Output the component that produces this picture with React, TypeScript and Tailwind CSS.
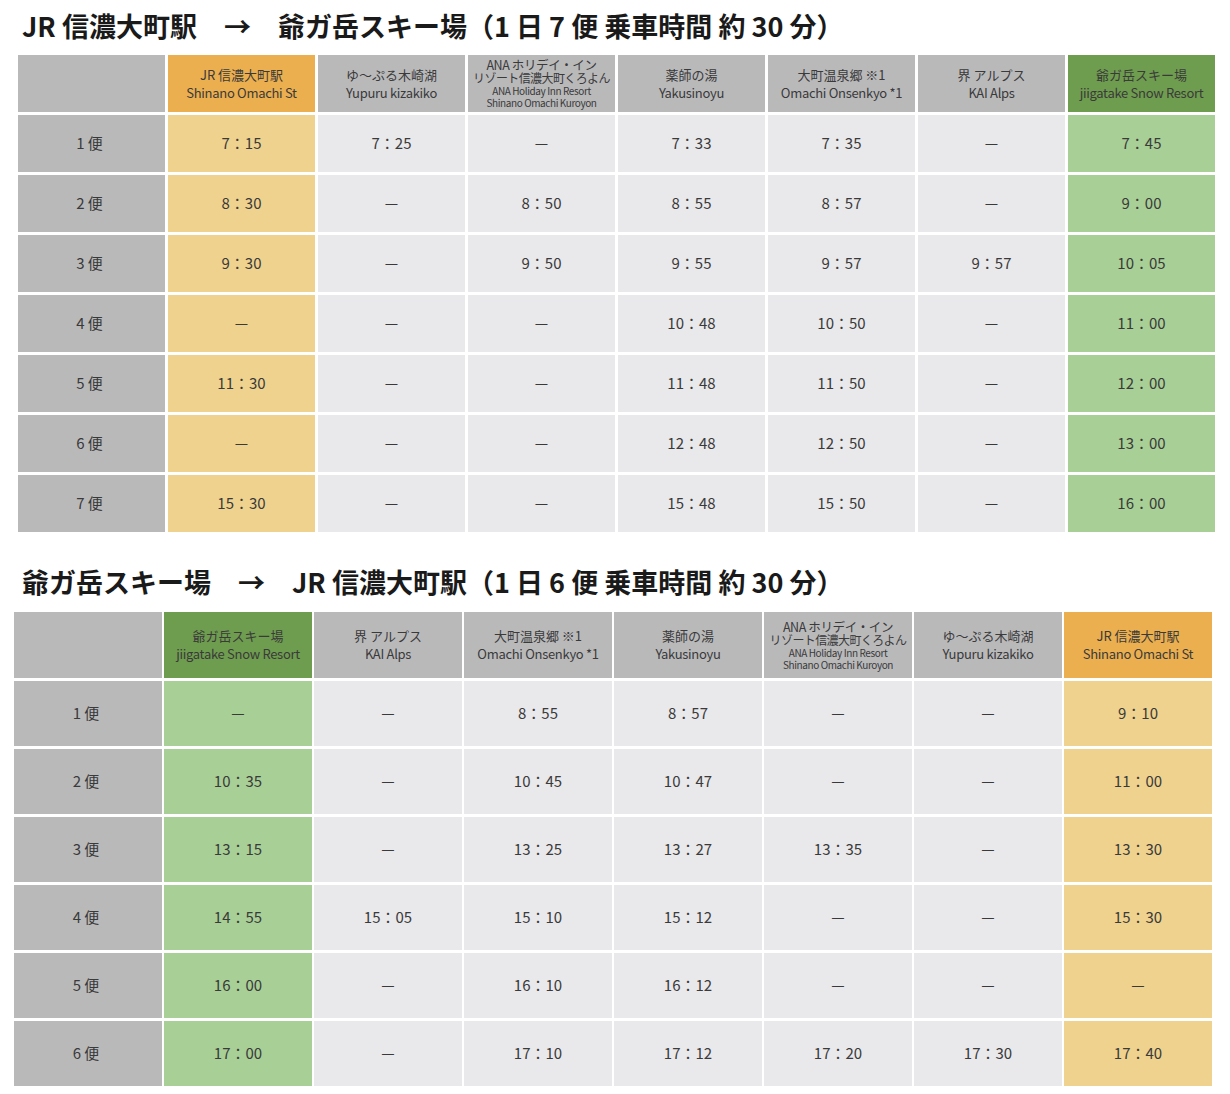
import type { ReactNode } from "react";

type Tone = "gray" | "orange" | "green";

type Stop = { key: string; tone: Tone; label: ReactNode };

const headBg: Record<Tone, string> = {
  gray: "bg-[#b9b9ba]",
  orange: "bg-[#ebaf4f]",
  green: "bg-[#6f9d4f]",
};

const bodyBg: Record<Tone, string> = {
  gray: "bg-[#e9e8eb]",
  orange: "bg-[#efd28e]",
  green: "bg-[#a8cf96]",
};

const TwoLine = ({ ja, en }: { ja: string; en: string }) => (
  <div className="flex flex-col items-center leading-[18px]">
    <span className="text-[13px]">{ja}</span>
    <span className="text-[13px] tracking-[-0.3px]">{en}</span>
  </div>
);

const AnaLabel = () => (
  <div className="flex flex-col items-center">
    <span className="text-[12.5px] leading-[13px] tracking-[-0.4px]">ANA ホリデイ・イン</span>
    <span className="text-[12px] leading-[14px] tracking-[-0.6px]">リゾート信濃大町くろよん</span>
    <span className="text-[10px] leading-[12px] tracking-[-0.4px]">ANA Holiday Inn Resort</span>
    <span className="text-[10px] leading-[12px] tracking-[-0.4px]">Shinano Omachi Kuroyon</span>
  </div>
);

const stops: Record<string, Stop> = {
  jr: { key: "jr", tone: "orange", label: <TwoLine ja="JR 信濃大町駅" en="Shinano Omachi St" /> },
  yupuru: { key: "yupuru", tone: "gray", label: <TwoLine ja="ゆ～ぷる木崎湖" en="Yupuru kizakiko" /> },
  ana: { key: "ana", tone: "gray", label: <AnaLabel /> },
  yakushi: { key: "yakushi", tone: "gray", label: <TwoLine ja="薬師の湯" en="Yakusinoyu" /> },
  onsen: { key: "onsen", tone: "gray", label: <TwoLine ja="大町温泉郷 ※1" en="Omachi Onsenkyo *1" /> },
  kai: { key: "kai", tone: "gray", label: <TwoLine ja="界 アルプス" en="KAI Alps" /> },
  jiigatake: { key: "jiigatake", tone: "green", label: <TwoLine ja="爺ガ岳スキー場" en="jiigatake Snow Resort" /> },
};

const D = "—";

const outbound = {
  title: "JR 信濃大町駅　→　爺ガ岳スキー場（1 日 7 便 乗車時間 約 30 分）",
  stops: [stops.jr, stops.yupuru, stops.ana, stops.yakushi, stops.onsen, stops.kai, stops.jiigatake],
  rows: [
    ["7：15", "7：25", D, "7：33", "7：35", D, "7：45"],
    ["8：30", D, "8：50", "8：55", "8：57", D, "9：00"],
    ["9：30", D, "9：50", "9：55", "9：57", "9：57", "10：05"],
    [D, D, D, "10：48", "10：50", D, "11：00"],
    ["11：30", D, D, "11：48", "11：50", D, "12：00"],
    [D, D, D, "12：48", "12：50", D, "13：00"],
    ["15：30", D, D, "15：48", "15：50", D, "16：00"],
  ],
};

const inbound = {
  title: "爺ガ岳スキー場　→　JR 信濃大町駅（1 日 6 便 乗車時間 約 30 分）",
  stops: [stops.jiigatake, stops.kai, stops.onsen, stops.yakushi, stops.ana, stops.yupuru, stops.jr],
  rows: [
    [D, D, "8：55", "8：57", D, D, "9：10"],
    ["10：35", D, "10：45", "10：47", D, D, "11：00"],
    ["13：15", D, "13：25", "13：27", "13：35", D, "13：30"],
    ["14：55", "15：05", "15：10", "15：12", D, D, "15：30"],
    ["16：00", D, "16：10", "16：12", D, D, D],
    ["17：00", D, "17：10", "17：12", "17：20", "17：30", "17：40"],
  ],
};

const Timetable = ({
  data,
  grid,
  headH,
  rowH,
}: {
  data: typeof outbound;
  grid: string;
  headH: string;
  rowH: string;
}) => (
  <div className={grid}>
    <div className={`${headH} bg-[#b9b9ba]`} />
    {data.stops.map((s) => (
      <div key={s.key} className={`${headH} ${headBg[s.tone]} flex items-center justify-center`}>
        {s.label}
      </div>
    ))}
    {data.rows.map((row, i) => (
      <div key={i} className="contents">
        <div className={`${rowH} bg-[#b9b9ba] flex items-center justify-center pr-[4px] text-[15px]`}>
          {i + 1} 便
        </div>
        {row.map((t, j) => (
          <div
            key={j}
            className={`${rowH} ${bodyBg[data.stops[j].tone]} flex items-center justify-center text-[15px]`}
          >
            {t}
          </div>
        ))}
      </div>
    ))}
  </div>
);

export default function App() {
  return (
    <div
      className="min-h-screen bg-white text-[#3a3a3a] pb-8"
      style={{ fontFamily: '"Noto Sans CJK JP", "Noto Sans", sans-serif' }}
    >
      <h2 className="h-[55px] pb-[3px] pl-[22px] flex items-center text-[27px] font-bold text-[#1a1a1a]">
        {outbound.title}
      </h2>
      <div className="pl-[18px]">
        <Timetable
          data={outbound}
          grid="grid w-[1197px] grid-cols-[repeat(8,147px)] gap-[3px]"
          headH="h-[57px]"
          rowH="h-[57px]"
        />
      </div>
      <h2 className="mt-[24px] h-[56px] pb-[3px] pl-[22px] flex items-center text-[27px] font-bold text-[#1a1a1a]">
        {inbound.title}
      </h2>
      <div className="pl-[14px]">
        <Timetable
          data={inbound}
          grid="grid w-[1198px] grid-cols-[repeat(8,148px)] gap-x-[2px] gap-y-[3px]"
          headH="h-[66px]"
          rowH="h-[65px]"
        />
      </div>
    </div>
  );
}
